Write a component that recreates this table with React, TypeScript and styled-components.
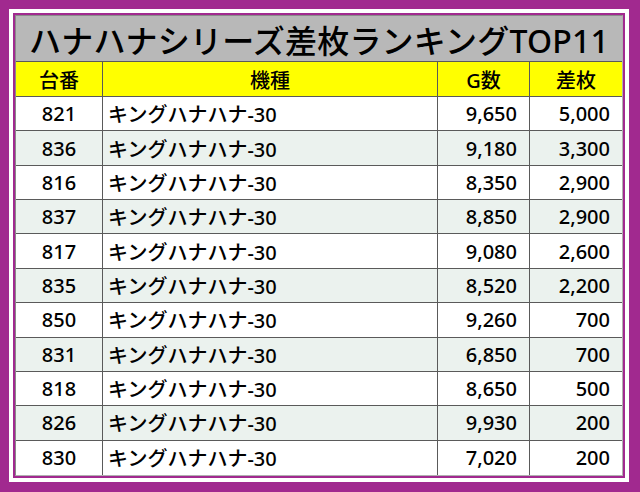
import * as React from 'react';
import styled, { createGlobalStyle } from 'styled-components';

const purple = '#a1298f';
const line = '#5a5a5a';

interface Row {
  no: string;
  name: string;
  games: string;
  diff: string;
}

const rows: Row[] = [
  { no: '821', name: 'キングハナハナ-30', games: '9,650', diff: '5,000' },
  { no: '836', name: 'キングハナハナ-30', games: '9,180', diff: '3,300' },
  { no: '816', name: 'キングハナハナ-30', games: '8,350', diff: '2,900' },
  { no: '837', name: 'キングハナハナ-30', games: '8,850', diff: '2,900' },
  { no: '817', name: 'キングハナハナ-30', games: '9,080', diff: '2,600' },
  { no: '835', name: 'キングハナハナ-30', games: '8,520', diff: '2,200' },
  { no: '850', name: 'キングハナハナ-30', games: '9,260', diff: '700' },
  { no: '831', name: 'キングハナハナ-30', games: '6,850', diff: '700' },
  { no: '818', name: 'キングハナハナ-30', games: '8,650', diff: '500' },
  { no: '826', name: 'キングハナハナ-30', games: '9,930', diff: '200' },
  { no: '830', name: 'キングハナハナ-30', games: '7,020', diff: '200' },
];

const GlobalStyle = createGlobalStyle`
  html, body {
    margin: 0;
    height: 100%;
    background: ${purple};
  }
  body {
    font-family: "Noto Sans", "Noto Sans CJK JP", sans-serif;
  }
`;

const Frame = styled.div`
  box-sizing: border-box;
  width: 620px;
  height: 473px;
  margin: 9px 0 0 9px;
  border: 4px solid #ffffff;
  background: ${purple};
  padding: 2px;
`;

const Panel = styled.div`
  box-sizing: border-box;
  height: 100%;
  border: 1px solid #8a8a8a;
  border-right-color: #b0b0b0;
  border-bottom-color: #b0b0b0;
  background: #ffffff;
  display: grid;
  grid-template-rows: 46px 35px repeat(11, 1fr);
`;

const Title = styled.div`
  background: #b8b8b8;
  border-bottom: 1px solid ${line};
  display: flex;
  align-items: center;
  padding-left: 13px;
  font-size: 32px;
  font-weight: 500;
  letter-spacing: 0.2px;
  color: #000;
  white-space: nowrap;
`;

const Line = styled.div<{ $head?: boolean; $tint?: boolean; $last?: boolean }>`
  display: grid;
  grid-template-columns: 87px 335px 92px 1fr;
  background: ${p => (p.$head ? '#ffff00' : p.$tint ? '#ebf2ee' : '#ffffff')};
  border-bottom: ${p => (p.$last ? 'none' : `1px solid ${line}`)};
`;

const Cell = styled.div<{ $align?: 'left' | 'center' | 'right' }>`
  display: flex;
  align-items: center;
  justify-content: ${p =>
    p.$align === 'left' ? 'flex-start' : p.$align === 'right' ? 'flex-end' : 'center'};
  padding: ${p => (p.$align === 'left' ? '0 0 0 5px' : p.$align === 'right' ? '0 12px 0 0' : '0')};
  font-size: 20px;
  font-weight: 500;
  color: #000;
  white-space: nowrap;
  border-right: 1px solid ${line};

  &:last-child {
    border-right: none;
  }
`;

export default function App() {
  return (
    <>
      <GlobalStyle />
      <Frame>
        <Panel>
          <Title>ハナハナシリーズ差枚ランキングTOP11</Title>
          <Line $head>
            <Cell>台番</Cell>
            <Cell>機種</Cell>
            <Cell>G数</Cell>
            <Cell>差枚</Cell>
          </Line>
          {rows.map((r, i) => (
            <Line key={r.no} $tint={i % 2 === 1} $last={i === rows.length - 1}>
              <Cell>{r.no}</Cell>
              <Cell $align="left">{r.name}</Cell>
              <Cell $align="right">{r.games}</Cell>
              <Cell $align="right">{r.diff}</Cell>
            </Line>
          ))}
        </Panel>
      </Frame>
    </>
  );
}
